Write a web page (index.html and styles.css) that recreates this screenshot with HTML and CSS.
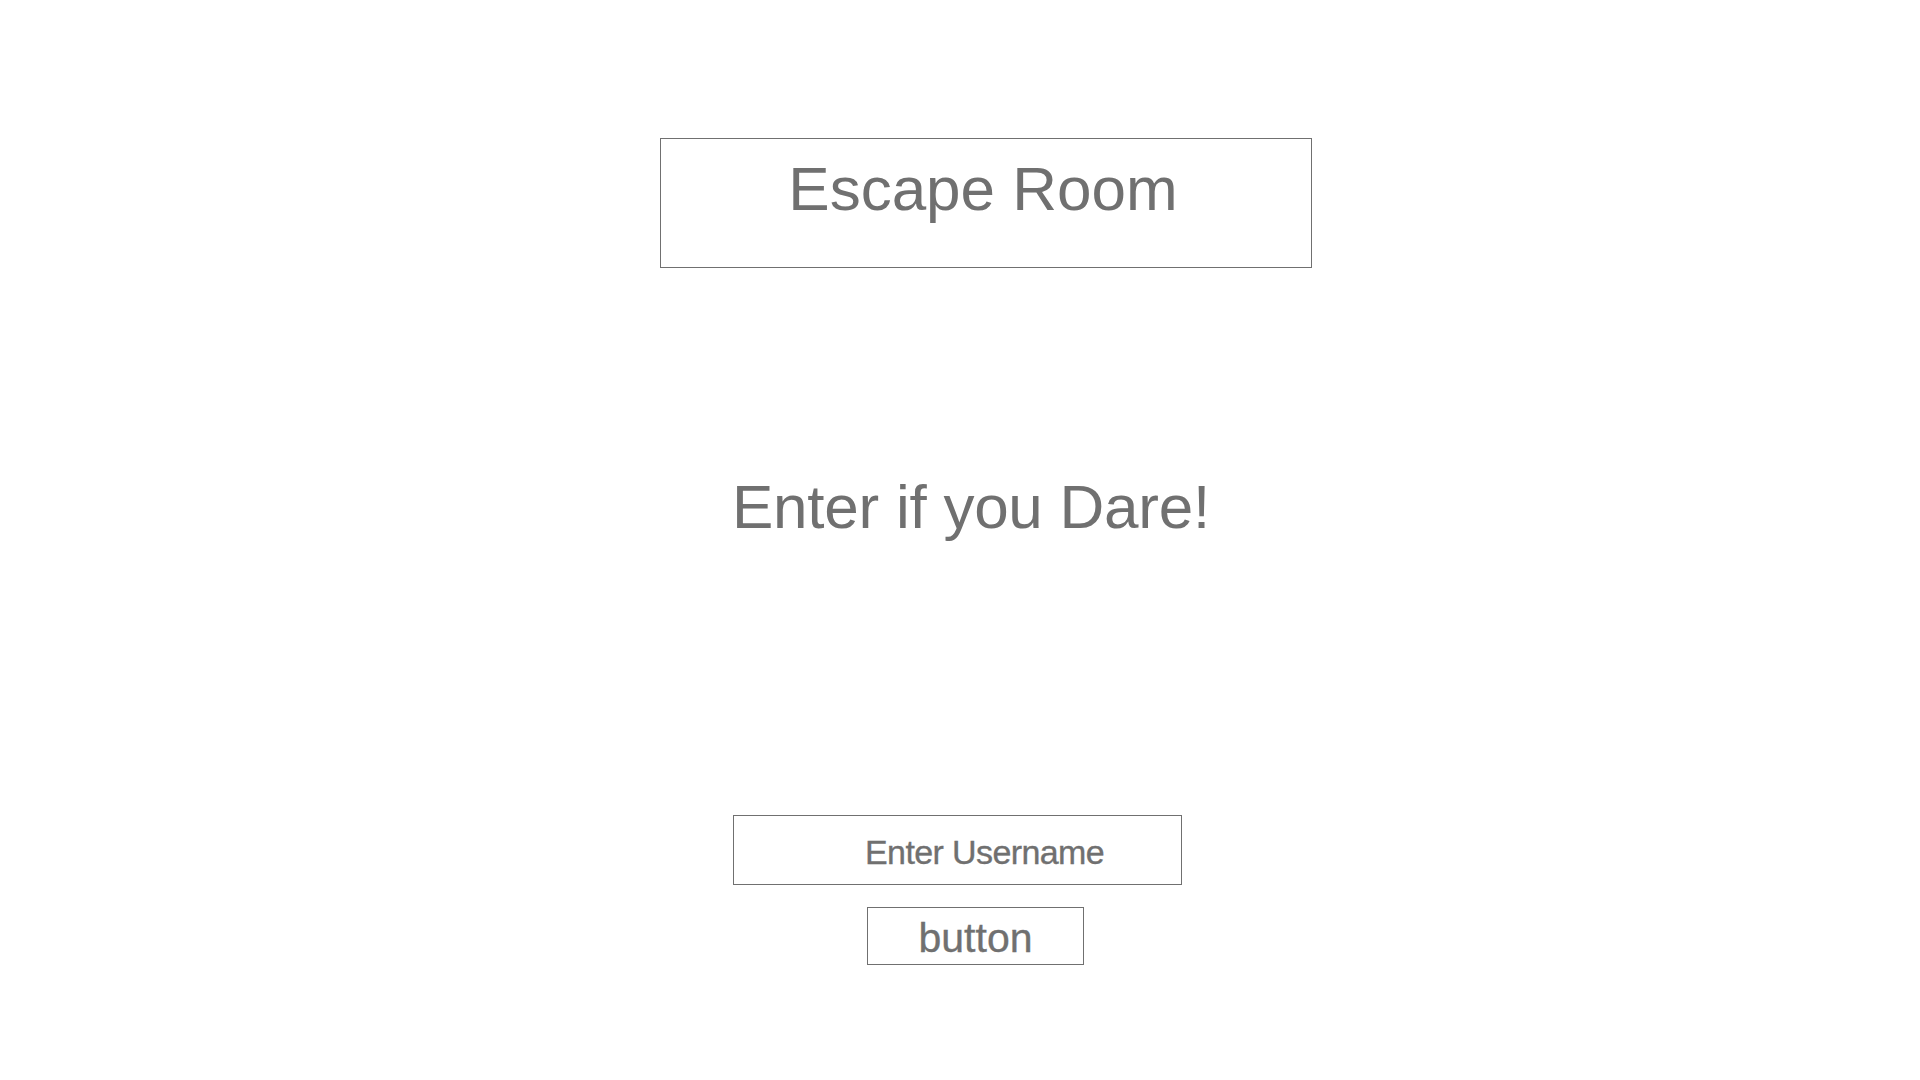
FILE: index.html
```html
<!DOCTYPE html>
<html lang="en">
<head>
<meta charset="utf-8">
<title>Escape Room</title>
<link rel="stylesheet" href="styles.css">
</head>
<body>
<main class="page">
  <header class="title-box">
    <h1 class="title">Escape Room</h1>
  </header>
  <section class="entry">
    <h2 class="tagline">Enter if you Dare!</h2>
    <form class="login" onsubmit="return false;">
      <input class="username" type="text" placeholder="Enter Username">
      <button class="go" type="submit">button</button>
    </form>
  </section>
</main>
</body>
</html>
```
FILE: styles.css
```css
html, body {
  margin: 0;
  padding: 0;
  background: #ffffff;
}

body {
  font-family: "Liberation Sans", Arial, Helvetica, sans-serif;
  color: #707070;
}

.page {
  display: flex;
  flex-direction: column;
  align-items: flex-start;
}

.title-box {
  box-sizing: border-box;
  margin: 138px 0 0 660px;
  width: 652px;
  height: 130px;
  border: 1px solid #707070;
  padding: 19px 6px 0 0;
}

.title {
  margin: 0;
  font-size: 62px;
  line-height: 62px;
  font-weight: 400;
  text-align: center;
  color: #707070;
}

.entry {
  display: flex;
  flex-direction: column;
  align-items: flex-start;
  margin: 208px 0 0 732px;
}

.tagline {
  margin: 0;
  font-size: 62px;
  line-height: 62px;
  font-weight: 400;
  letter-spacing: -0.25px;
  color: #707070;
}

.login {
  display: flex;
  flex-direction: column;
  align-items: flex-start;
  margin: 277px 0 0 0;
}

.username {
  box-sizing: border-box;
  margin: 0 0 0 1px;
  width: 449px;
  height: 70px;
  border: 1px solid #707070;
  border-radius: 0;
  padding: 4px 0 0 131px;
  font-family: "Liberation Sans", Arial, Helvetica, sans-serif;
  font-size: 34px;
  letter-spacing: -0.6px;
  -webkit-text-stroke: 0.35px #707070;
  color: #707070;
  background: #ffffff;
  outline: none;
}

.username::placeholder {
  color: #707070;
  opacity: 1;
}

.go {
  box-sizing: border-box;
  margin: 22px 0 0 135px;
  width: 217px;
  height: 58px;
  border: 1px solid #707070;
  border-radius: 0;
  padding: 4px 0 0 0;
  background: #ffffff;
  font-family: "Liberation Sans", Arial, Helvetica, sans-serif;
  font-size: 41px;
  line-height: 1;
  -webkit-text-stroke: 0.35px #707070;
  color: #707070;
  cursor: pointer;
}
```
